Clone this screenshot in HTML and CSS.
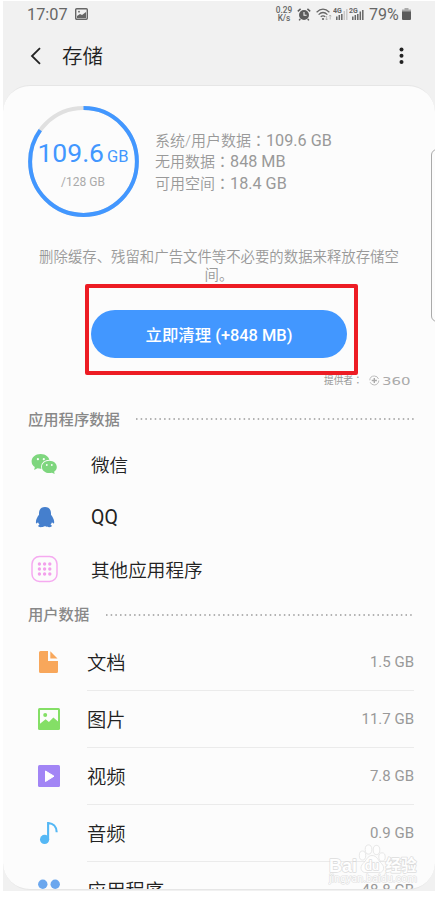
FILE: index.html
```html
<!DOCTYPE html>
<html lang="zh-CN">
<head>
    <meta charset="UTF-8">
    <meta name="viewport" content="width=device-width, initial-scale=1.0">
    <title>存储</title>
    <link rel="stylesheet" href="styles.css">
</head>
<body>
    <div class="phone">
        <div class="status">
            <span class="time">17:07</span>
            <svg class="pic" width="13" height="12" viewBox="0 0 13 12">
                <rect x="0.7" y="0.7" width="11.6" height="10.6" rx="1" fill="none" stroke="#666" stroke-width="1.4"/>
                <path d="M2 10V8l3-2 2 1 4-3v6z" fill="#666"/>
                <circle cx="4" cy="3.7" r="0.9" fill="#666"/>
            </svg>
            <div class="speed">0.29<br>K/s</div>
            <svg class="alarm" width="14" height="13" viewBox="0 0 14 13">
                <circle cx="7" cy="7" r="5" fill="#5c5c5c"/>
                <path d="M0.8 3.4 3.6 0.9M13.2 3.4 10.4 0.9M3.2 11 2.2 12.4M10.8 11l1 1.4" stroke="#5c5c5c" stroke-width="1.5"/>
                <path d="M7 4v3.3h2.6" fill="none" stroke="#f1f1f1" stroke-width="1.1"/>
            </svg>
            <svg class="wifi" width="17" height="13" viewBox="0 0 17 13">
                <path d="M0.6 4.3Q7-1.9 13.4 4.3M2.6 6.6Q7 2.4 11.4 6.6M4.7 8.8Q7 6.8 9.3 8.8" fill="none" stroke="#666" stroke-width="1.2"/>
                <circle cx="7" cy="11" r="1.1" fill="#666"/>
                <path d="M10.6 8v4M9.5 10.7l1.1 1.3 1.1-1.3M14.2 11.5V7M13 8.3 14.2 7l1.2 1.3" fill="none" stroke="#aaa" stroke-width="0.8"/>
            </svg>
            <svg class="signal" width="15" height="14" viewBox="0 0 15 14">
                <text x="0" y="6" class="net">4G</text>
                <path d="M3.8 13V9.5M6.3 13V8M8.8 13V7" stroke="#666" stroke-width="1.5"/>
                <path d="M11.3 13V4M13.8 13V2" stroke="#c8c8c8" stroke-width="1.5"/>
            </svg>
            <svg class="signal second" width="15" height="14" viewBox="0 0 15 14">
                <text x="0" y="6" class="net">2G</text>
                <path d="M3.8 13V9.5M6.3 13V8M8.8 13V7M11.3 13V4.5M13.8 13V3" stroke="#666" stroke-width="1.5"/>
            </svg>
            <span class="percent">79%</span>
            <svg class="battery" width="9" height="12" viewBox="0 0 9 12">
                <path d="M2.5 0h4v1.5H9V4H0V1.5h2.5z" fill="#aaa"/>
                <path d="M0 3.5h9V11a1 1 0 0 1-1 1H1a1 1 0 0 1-1-1z" fill="#5c5c5c"/>
            </svg>
        </div>

        <div class="header">
            <svg width="12" height="18" viewBox="0 0 12 18"><path d="M10 1.2 2 9l8 7.8" fill="none" stroke="#222" stroke-width="1.8"/></svg>
            <h1>存储</h1>
            <svg class="more" width="5" height="18" viewBox="0 0 5 18">
                <circle cx="2.5" cy="2.5" r="2"/><circle cx="2.5" cy="8.8" r="2"/><circle cx="2.5" cy="15" r="2"/>
            </svg>
        </div>

        <div class="card">
            <div class="summary">
                <div class="ring">
                    <svg class="circle" width="111" height="111" viewBox="0 0 111 111">
                        <circle cx="55.5" cy="55.5" r="53.4" fill="none" stroke="#e0e0e0" stroke-width="4"/>
                        <circle cx="55.5" cy="55.5" r="53.4" fill="none" stroke="#4297ff" stroke-width="4" pathLength="100" stroke-dasharray="85 15" transform="rotate(-90 55.5 55.5)"/>
                    </svg>
                    <div class="used">109.6<small>GB</small></div>
                    <div class="total">/128 GB</div>
                </div>
                <div class="info">
                    <div>系统/用户数据<i lang="zh-TW">：</i><b>109.6 GB</b></div>
                    <div>无用数据<i lang="zh-TW">：</i><b>848 MB</b></div>
                    <div>可用空间<i lang="zh-TW">：</i><b>18.4 GB</b></div>
                </div>
            </div>

            <p class="desc">删除缓存、残留和广告文件等不必要的数据来释放存储空间。</p>

            <div class="clean">
                <button>立即清理 (+848 MB)</button>
                <div class="mark"></div>
            </div>

            <div class="provider">
                <span>提供者<i lang="zh-TW">：</i></span>
                <svg width="43" height="11" viewBox="0 0 43 11">
                    <circle cx="5.3" cy="5.5" r="4.5" fill="none" stroke="#b5b5b5" stroke-width="0.9" stroke-dasharray="12 2"/>
                    <path d="M5.3 2.9v5.2M2.7 5.5h5.2" stroke="#aaa" stroke-width="1.4"/>
                    <text x="13" y="9.5" textLength="28.5" lengthAdjust="spacingAndGlyphs" class="brand">360</text>
                </svg>
            </div>

            <div class="section">
                <h2>应用程序数据</h2>
                <svg width="279" height="2"><path d="M0 1h279" class="dots"/></svg>
            </div>
            <ul class="apps">
                <li>
                    <svg width="28" height="28" viewBox="0 0 28 28">
                        <path d="M9.6 4C4.4 4 .6 7.3.6 11.4c0 2.4 1.3 4.3 3.2 5.7L3.2 20l3.3-1.7c1 .3 2 .4 3.1.4 5.2 0 9-3.2 9-7.3S14.8 4 9.6 4z" fill="#7ed67e"/>
                        <ellipse cx="18.4" cy="16.8" rx="8.4" ry="7.1" fill="#fcfcfc"/>
                        <path d="M18.4 10.7c-4.3 0-7.5 2.8-7.5 6.2s3.2 6.1 7.5 6.1c.9 0 1.7-.1 2.5-.3l2.8 1.3-.6-2.3c1.7-1.2 2.7-2.9 2.7-4.8 0-3.4-3.2-6.2-7.4-6.2z" fill="#7ed67e"/>
                        <g fill="#fcfcfc"><circle cx="6.9" cy="9.2" r="1.1"/><circle cx="12.8" cy="9.2" r="1.1"/><circle cx="15.8" cy="15" r=".9"/><circle cx="20.8" cy="15" r=".9"/></g>
                    </svg>
                    <span>微信</span>
                </li>
                <li>
                    <svg width="28" height="28" viewBox="0 0 28 28">
                        <path d="M14 4c-4.1 0-6 2.8-6 6.2v1.6c-1.5 2-3.1 4.7-3.1 7.1 0 1.7.9 2.1 2.1.4.3 1 .8 1.8 1.5 2.5-1.2.4-1.7 1.2-1 1.8 1.4 1 4.5.6 6.2-.3h.6c1.7.9 4.9 1.3 6.2.3.7-.6.2-1.4-1-1.8.7-.7 1.2-1.5 1.5-2.5 1.3 1.7 2.2 1.3 2.2-.4 0-2.4-1.7-5.1-3.2-7.1v-1.6C20 6.8 18.1 4 14 4z" fill="#457fcd"/>
                    </svg>
                    <span class="latin">QQ</span>
                </li>
                <li>
                    <svg width="28" height="28" viewBox="0 0 28 28">
                        <rect x="1" y="1.5" width="25" height="25" rx="7.5" fill="none" stroke="#f5aaf0" stroke-width="1.5"/>
                        <path d="M8.4 9h10.5M8.4 14h10.5M8.4 19h10.5" stroke="#f3a0ec" stroke-width="3.4" stroke-linecap="round" stroke-dasharray="0 5.2"/>
                    </svg>
                    <span>其他应用程序</span>
                </li>
            </ul>

            <div class="section user">
                <h2>用户数据</h2>
                <svg width="308" height="2"><path d="M0 1h308" class="dots"/></svg>
            </div>
            <ul class="files">
                <li>
                    <svg width="22" height="22" viewBox="0 0 22 22">
                        <path d="M3.2 0H10v10h10v10.5a1.5 1.5 0 0 1-1.5 1.5H2.500A1.5 1.5 0 0 1 1 20.500V1.500A1.500 1.500 0 0 1 2.500 0z" fill="#f8a75b"/>
                        <path d="M12.3.3 19.5 7.5h-7.2z" fill="#f8a75b"/>
                    </svg>
                    <div class="line"><span>文档</span><em>1.5 GB</em></div>
                </li>
                <li>
                    <svg width="22" height="22" viewBox="0 0 22 22">
                        <rect width="22" height="22" rx="1.5" fill="#84df66"/>
                        <path d="M2 2h18v11.5l-4.6-4.1-4.5 4.6-3.3-2.7L2 15.800z" fill="#fcfcfc"/>
                        <circle cx="7.2" cy="7" r="2" fill="#84df66"/>
                    </svg>
                    <div class="line"><span>图片</span><em>11.7 GB</em></div>
                </li>
                <li>
                    <svg width="22" height="22" viewBox="0 0 22 22">
                        <rect width="22" height="22" rx="1.5" fill="#a285f5"/>
                        <path d="M7.5 6v10.5l8.5-5.3z" fill="#fff" stroke="#fff" stroke-width="1" stroke-linejoin="round"/>
                    </svg>
                    <div class="line"><span>视频</span><em>7.8 GB</em></div>
                </li>
                <li>
                    <svg width="22" height="22" viewBox="0 0 22 22">
                        <circle cx="6.6" cy="17.4" r="4.6" fill="#55b8f5"/>
                        <path d="M10.1 17.4V1c4.9.3 8.5 3.5 8.6 9.3" fill="none" stroke="#55b8f5" stroke-width="2.1"/>
                    </svg>
                    <div class="line"><span>音频</span><em>0.9 GB</em></div>
                </li>
                <li>
                    <svg width="22" height="22" viewBox="0 0 22 22" fill="#6ba7ee">
                        <circle cx="4.8" cy="5.3" r="4.7"/><circle cx="17.2" cy="5.3" r="4.7"/>
                        <circle cx="4.8" cy="17.2" r="4.7"/><circle cx="17.2" cy="17.2" r="4.7"/>
                    </svg>
                    <div class="line"><span>应用程序</span><em>48.8 GB</em></div>
                </li>
            </ul>
        </div>

        <div class="edge"></div>

        <svg class="watermark" width="92" height="46" viewBox="0 0 92 46">
            <g fill="#fff" stroke="#dcdcdc" stroke-width="0.8">
                <ellipse cx="34.5" cy="15.5" rx="3.2" ry="4.5"/>
                <ellipse cx="40.5" cy="9.5" rx="3.3" ry="4.6"/>
                <ellipse cx="48.5" cy="10" rx="3.3" ry="4.6"/>
                <ellipse cx="54" cy="17" rx="3.2" ry="4.2"/>
                <path d="M44 15.500c-4.500 0-5.500 5-9 8-4 4-1.500 9.500 3 9h12.500c5 .5 7-5 3-9-3.500-3-4.500-8-9.500-8z"/>
            </g>
            <text x="1" y="32" textLength="28" lengthAdjust="spacingAndGlyphs" class="wm-big">Bai</text>
            <text x="37" y="30" textLength="14" lengthAdjust="spacingAndGlyphs" class="wm-du">du</text>
            <text x="57.5" y="31" class="wm-cn">经验</text>
            <text x="1" y="42" textLength="88" lengthAdjust="spacingAndGlyphs" class="wm-url">jingyan.baidu.com</text>
        </svg>
    </div>
</body>
</html>
```
FILE: styles.css
```css
* {
    box-sizing: border-box;
}
body {
    margin: 0;
    background: #fff;
    font-family: Roboto, "Noto Sans CJK SC", sans-serif;
    color: #222;
}
h1, h2, p, ul {
    margin: 0;
    padding: 0;
    font-weight: normal;
}
i, em, b {
    font-style: normal;
    font-weight: normal;
}
/* full-width colon sits in the middle of its box */
i {
    font-family: "Noto Sans CJK TC", sans-serif;
}
svg {
    display: block;
    flex: none;
}
.phone {
    position: relative;
    width: 432px;
    height: 890px;
    margin: 1px 0 0 3px;
    background: #f1f1f1;
    overflow: hidden;
}

/* status bar */
.status {
    display: flex;
    align-items: center;
    height: 26px;
    padding-left: 24px;
    color: #666;
    font-size: 16.3px;
}
.time {
    width: 48px;
}
.speed {
    width: 18px;
    margin-left: 187px;
    font-size: 8.3px;
    font-weight: 500;
    line-height: 8px;
    text-align: center;
}
.alarm {
    margin-left: 4px;
}
.wifi {
    margin-left: 5px;
}
.second {
    margin-left: 1px;
}
.net {
    font-size: 7px;
    font-weight: 700;
    fill: #666;
}
.percent {
    margin-left: 5px;
    font-size: 16px;
}
.battery {
    margin-left: 3px;
}

/* title */
.header {
    display: flex;
    align-items: center;
    height: 58px;
    padding: 0 31px 0 27px;
}
.header h1 {
    flex: 1;
    margin: 1px 0 0 20px;
    font-size: 20.5px;
    font-weight: 350;
    line-height: 30px;
}
.more {
    fill: #222;
}

.card {
    height: 805px;
    padding: 20px 20px 0 25px;
    background: #fcfcfc;
    border: 1px solid #e6e6e6;
    border-width: 1px 0;
    border-radius: 27px;
    overflow: hidden;
}
.summary {
    display: flex;
    height: 111px;
}
.ring {
    position: relative;
    width: 110px;
    height: 111px;
    padding-top: 31px;
    text-align: center;
}
.circle {
    position: absolute;
    left: -0.5px;
    top: 0;
}
.used {
    color: #4297ff;
    font-size: 26.5px;
    line-height: 31px;
    white-space: nowrap;
}
.used small {
    margin-left: 3px;
    font-size: 16.5px;
}
.total {
    margin-top: 6px;
    color: #aaa;
    font-size: 12px;
    line-height: 8px;
}
.info {
    margin: 23px 0 0 17px;
    color: #999;
    font-size: 15px;
    font-weight: 350;
}
.info div {
    height: 21.4px;
    line-height: 21.4px;
}
.info b {
    font-size: 16.2px;
}
.desc {
    width: 366px;
    margin: 32px 0 0 8px;
    color: #999;
    font-size: 14.4px;
    font-weight: 350;
    line-height: 18px;
    text-align: center;
}

/* clean button */
.clean {
    position: relative;
    width: 256px;
    margin: 25px 0 0 63px;
}
.clean button {
    display: block;
    width: 256px;
    height: 48px;
    padding: 0;
    border: none;
    border-radius: 24px;
    background: #4297ff;
    color: #fff;
    font-family: inherit;
    font-size: 16.4px;
    font-weight: 500;
}
.mark {
    position: absolute;
    left: -6px;
    top: -26px;
    width: 273px;
    height: 91px;
    border: 4px solid #ed1c24;
    border-radius: 2px;
}
.provider {
    display: flex;
    align-items: center;
    height: 14px;
    margin: 15px 0 0 296px;
    color: #999;
    font-size: 9.7px;
    line-height: 14px;
}
.provider svg {
    margin-left: 6px;
}
.brand {
    font-family: "DejaVu Sans", sans-serif;
    font-size: 10px;
    fill: #aaa;
}

/* lists */
.section {
    display: flex;
    align-items: center;
    justify-content: space-between;
    height: 24px;
    margin-top: 20px;
}
.section h2 {
    margin-top: 1px;
    color: #888;
    font-size: 15.3px;
    font-weight: 500;
    line-height: 24px;
}
.dots {
    stroke: #999;
    stroke-width: 1.3;
    stroke-dasharray: 1.5 3.18;
}
ul {
    list-style: none;
}
li {
    display: flex;
    align-items: center;
}
.apps {
    padding: 7px 0 0 3px;
}
.apps li {
    height: 52.5px;
}
.apps span {
    margin: 3px 0 0 32px;
    font-size: 18.6px;
    font-weight: 350;
    line-height: 28px;
}
.apps .latin {
    font-size: 19.5px;
    font-weight: 400;
}
.user {
    margin-top: 7px;
    padding-right: 1px;
}
.files {
    padding: 7px 1px 0 10px;
}
.files li {
    height: 57.1px;
}
.line {
    display: flex;
    align-items: center;
    justify-content: space-between;
    flex: 1;
    height: 57.1px;
    margin-left: 27px;
    border-bottom: 1px solid #ebebeb;
    font-size: 19.3px;
}
.line span {
    margin-top: 1px;
    font-weight: 350;
}
.line em {
    margin-top: 1px;
    color: #999;
    font-size: 15px;
}

/* edge panel handle */
.edge {
    position: absolute;
    left: 428px;
    top: 148px;
    width: 12px;
    height: 173px;
    border: 1px solid #aaa;
    border-radius: 6px;
}

.watermark {
    position: absolute;
    left: 325px;
    top: 839px;
    opacity: 0.8;
}
.watermark text {
    fill: #fff;
    stroke: #d5d5d5;
    stroke-width: 1.4;
    stroke-linejoin: round;
    paint-order: stroke;
}
.watermark .wm-big {
    font-family: "Liberation Sans", sans-serif;
    font-size: 19px;
    font-weight: 700;
}
.watermark .wm-du {
    font-size: 13px;
    font-weight: 700;
}
.watermark .wm-cn {
    font-size: 15.5px;
    font-weight: 700;
}
.watermark .wm-url {
    font-size: 10.5px;
    stroke-width: 1;
}
```
